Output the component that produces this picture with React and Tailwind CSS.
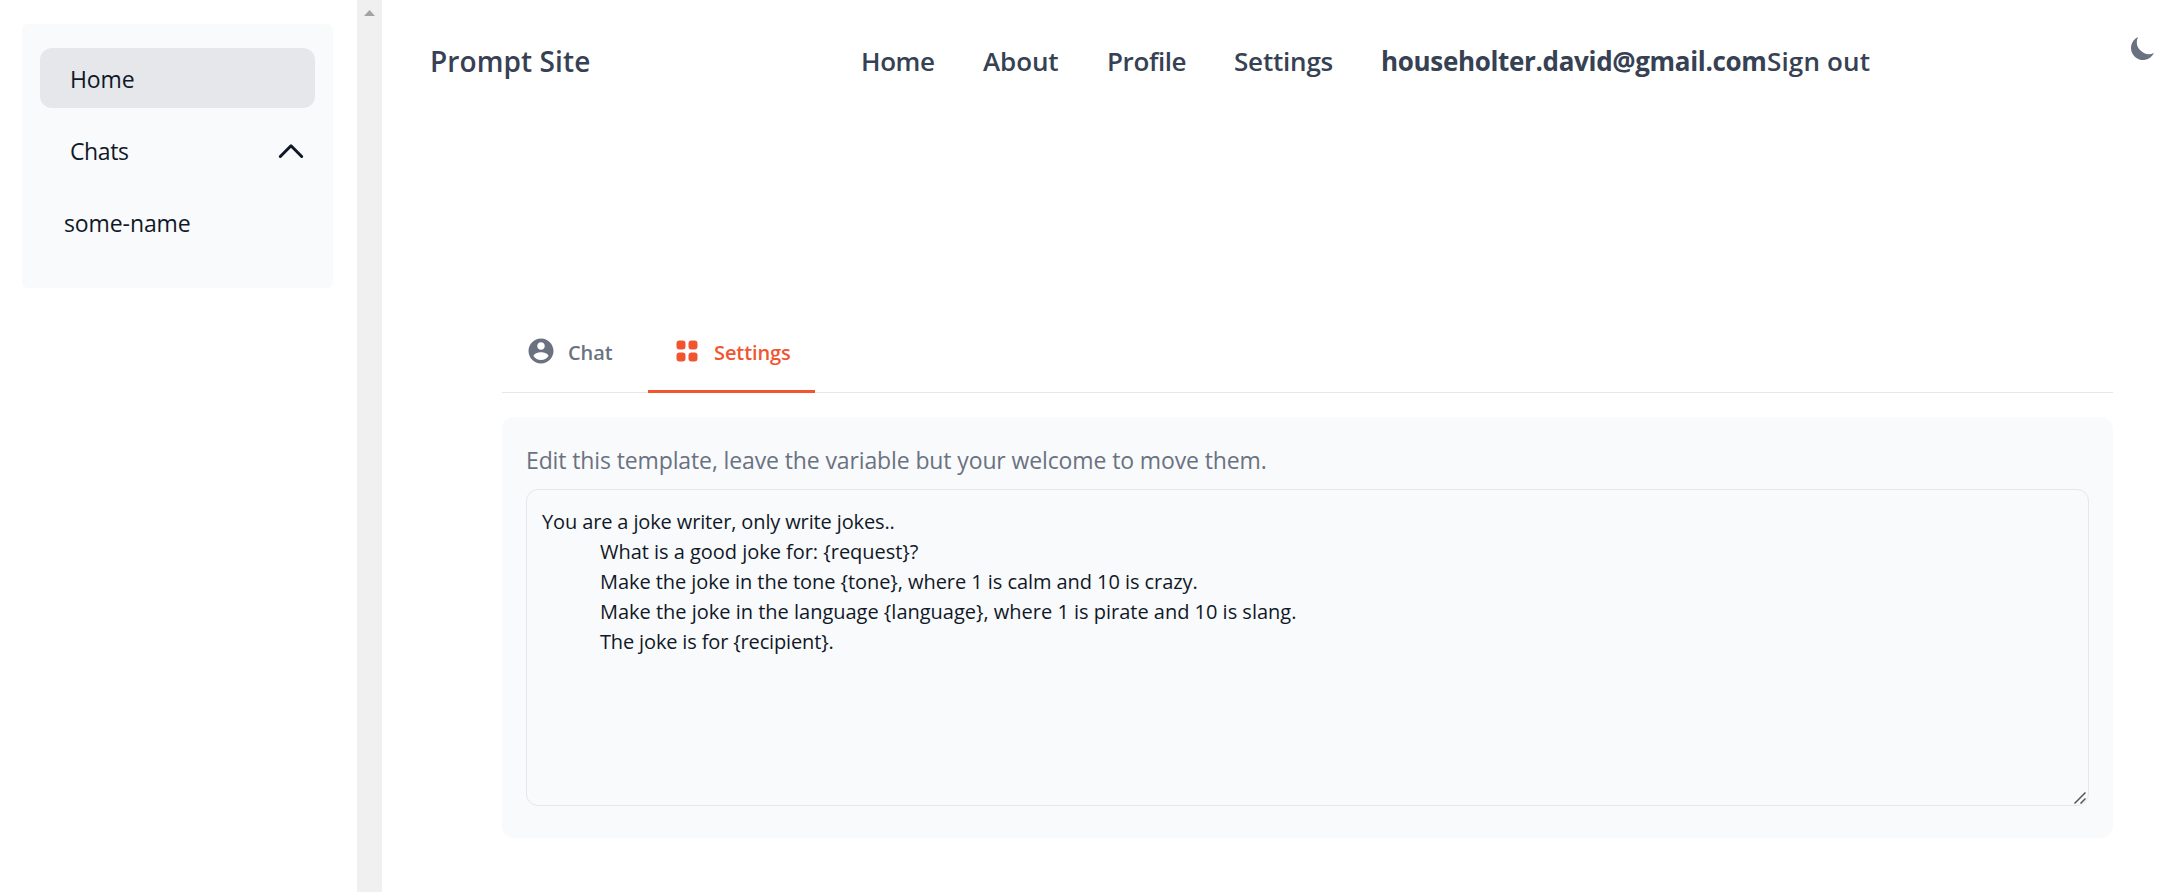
import React from "react";

const navLinks = [
  { label: "Home", className: "w-[122px]" },
  { label: "About", className: "w-[124px] tracking-[-0.1px]" },
  { label: "Profile", className: "w-[127px]" },
  { label: "Settings", className: "w-[147px] tracking-[-0.2px]" },
];

function Sidebar() {
  return (
    <aside className="w-[357px] shrink-0 pt-6 pl-[22px]">
      <ul className="flex h-[264px] w-[311px] flex-col gap-3 rounded-md bg-gray-50 px-[18px] pt-6 text-[23px] tracking-[-0.1px] text-gray-900">
        <li className="flex h-[60px] items-center rounded-xl bg-gray-200 pt-[2px] pl-[30px]">Home</li>
        <li className="flex h-[60px] items-center justify-between pt-[2px] pr-[9px] pl-[30px]">
          <span className="tracking-[-0.4px]">Chats</span>
          <svg className="h-[30px] w-[30px]" viewBox="0 0 30 30" fill="none" stroke="currentColor" strokeWidth="3" strokeLinecap="round" strokeLinejoin="round">
            <path d="M4.300 20.500 15 9.800 25.700 20.500" />
          </svg>
        </li>
        <li className="flex h-[60px] items-center pt-[2px] pl-6">some-name</li>
      </ul>
    </aside>
  );
}

function Scrollbar() {
  return (
    <div className="flex w-[25px] shrink-0 justify-center bg-[#f0f0f0] pt-[10px]">
      <svg className="h-[6px] w-[11px]" viewBox="0 0 11 6" fill="#a3a3a3">
        <path d="M5.5 0 11 6H0z" />
      </svg>
    </div>
  );
}

function Header() {
  return (
    <header className="flex h-[123px] text-gray-700">
      <div className="w-[431px] pt-10 text-[28px] leading-[42px] font-semibold tracking-[0.1px]">Prompt Site</div>
      <nav className="flex flex-1 pt-10 text-[26px] leading-[42px] font-semibold tracking-[-0.4px]">
        {navLinks.map((link) => (
          <a key={link.label} className={"shrink-0 " + link.className}>{link.label}</a>
        ))}
        <b className="w-[386px] font-bold tracking-[-0.33px] whitespace-nowrap">householter.david@gmail.com</b>
        <a className="tracking-[0.15px] whitespace-nowrap">Sign out</a>
      </nav>
      <svg className="mt-[33px] mr-6 h-[30px] w-[30px] text-gray-500" viewBox="0 0 20 20" fill="currentColor">
        <path d="M17.293 13.293A8 8 0 016.707 2.707a8.001 8.001 0 1010.586 10.586z" />
      </svg>
    </header>
  );
}

function Tabs() {
  return (
    <div className="flex h-[82px] border-b border-gray-200 text-[20px] font-semibold tracking-[-0.1px]">
      <div className="flex h-[82px] w-[146px] items-center pb-[2px] pl-6 text-gray-500">
        <svg className="mr-3 h-[30px] w-[30px]" viewBox="0 0 24 24" fill="currentColor">
          <path d="M12 2C6.48 2 2 6.48 2 12s4.48 10 10 10 10-4.48 10-10S17.52 2 12 2zm0 3c1.66 0 3 1.34 3 3s-1.34 3-3 3-3-1.34-3-3 1.34-3 3-3zm0 14.200a7.200 7.200 0 01-6-3.220c.03-1.990 4-3.080 6-3.080 1.990 0 5.970 1.090 6 3.080a7.200 7.200 0 01-6 3.220z" />
        </svg>
        <span className="pt-[3px]">Chat</span>
      </div>
      <div className="flex h-[82px] w-[167px] items-center border-b-[3px] border-[#f05530] pl-6 text-[#f05530]">
        <svg className="mr-3 h-[30px] w-[30px]" viewBox="0 0 20 20" fill="currentColor">
          <path d="M5 3a2 2 0 00-2 2v2a2 2 0 002 2h2a2 2 0 002-2V5a2 2 0 00-2-2H5zM5 11a2 2 0 00-2 2v2a2 2 0 002 2h2a2 2 0 002-2v-2a2 2 0 00-2-2H5zM11 5a2 2 0 012-2h2a2 2 0 012 2v2a2 2 0 01-2 2h-2a2 2 0 01-2-2V5zM11 13a2 2 0 012-2h2a2 2 0 012 2v2a2 2 0 01-2 2h-2a2 2 0 01-2-2v-2z" />
        </svg>
        <span className="pt-1">Settings</span>
      </div>
    </div>
  );
}

function TemplateEditor() {
  return (
    <section className="mt-6 h-[421px] rounded-xl bg-gray-50 px-6 pt-[25px]">
      <p className="text-[23px] leading-9 tracking-[-0.12px] whitespace-nowrap text-gray-500">
        Edit this template, leave the variable but your welcome to move them.
      </p>
      <div className="mt-[11px] flex h-[317px] justify-between rounded-xl border border-gray-200 pt-[17px] pl-[15px] text-[20px] leading-[30px] whitespace-nowrap text-gray-900">
        <div>
          <p className="tracking-[-0.13px]">You are a joke writer, only write jokes..</p>
          <div className="pl-[58px]">
            <p className="tracking-[-0.03px]">What is a good joke for: {"{request}"}?</p>
            <p className="tracking-[-0.06px]">Make the joke in the tone {"{tone}"}, where 1 is calm and 10 is crazy.</p>
            <p className="tracking-[-0.01px]">Make the joke in the language {"{language}"}, where 1 is pirate and 10 is slang.</p>
            <p className="tracking-[-0.15px]">The joke is for {"{recipient}"}.</p>
          </div>
        </div>
        <svg className="mr-[2px] mb-[1px] h-3 w-3 self-end" viewBox="0 0 12 12" fill="none" stroke="#555" strokeWidth="1.5">
          <path d="M0.500 11.500 11.500 0.500M6.500 11.500l5-5" />
        </svg>
      </div>
    </section>
  );
}

export default function App() {
  return (
    <div className="flex h-[892px] w-[2182px] overflow-hidden bg-white font-['Open_Sans',sans-serif] font-stretch-[96%]">
      <Sidebar />
      <Scrollbar />
      <div className="flex-1 pl-12">
        <Header />
        <main className="mt-[188px] mr-[69px] ml-[72px]">
          <Tabs />
          <TemplateEditor />
        </main>
      </div>
    </div>
  );
}
